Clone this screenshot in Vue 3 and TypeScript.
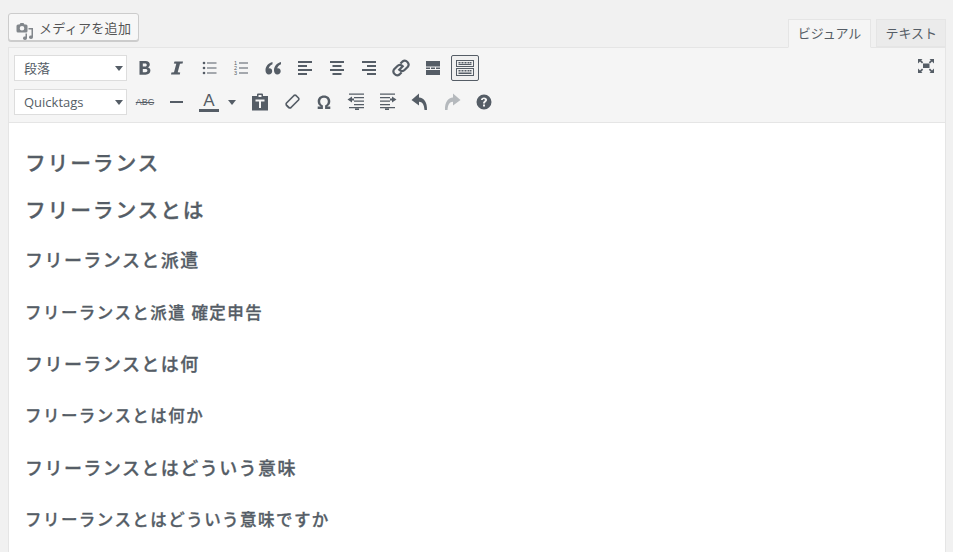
<script setup lang="ts">
interface Line { text: string; size: string; nudge: string }
const lines: Line[] = [
  { text: 'フリーランス', size: 'lg', nudge: 'a' },
  { text: 'フリーランスとは', size: 'lg', nudge: 'b' },
  { text: 'フリーランスと派遣', size: 'md', nudge: 'c' },
  { text: 'フリーランスと派遣 確定申告', size: 'sm', nudge: 'd' },
  { text: 'フリーランスとは何', size: 'md', nudge: 'e' },
  { text: 'フリーランスとは何か', size: 'sm', nudge: 'f' },
  { text: 'フリーランスとはどういう意味', size: 'md', nudge: 'g' },
  { text: 'フリーランスとはどういう意味ですか', size: 'sm', nudge: 'h' },
]
</script>

<template>
  <div class="page">
    <div class="top">
      <button class="media">
        <svg width="18" height="18" viewBox="0 0 18 18">
          <path fill="#82878c" fill-rule="evenodd" d="M2 2.500h1.500L4.500 1h3l1 1.500H10a1.500 1.500 0 0 1 1.500 1.500v5a1.500 1.500 0 0 1-1.500 1.500H2A1.500 1.500 0 0 1 .5 9V4A1.500 1.500 0 0 1 2 2.500zM6 4a2.300 2.300 0 1 0 0 4.600A2.300 2.300 0 0 0 6 4z" />
          <path fill="#82878c" d="M12.500 6H17v9.200a2 1.700 0 1 1-1.500-1.600V7.500h-3zM11 11.500v4.700a2 1.700 0 1 1-1.500-1.600v-3.100z" />
        </svg>
        <span>メディアを追加</span>
      </button>
      <div class="tabs">
        <div class="tab active">ビジュアル</div>
        <div class="tab">テキスト</div>
      </div>
    </div>
    <div class="editor">
      <div class="toolbar">
        <div class="row">
          <div class="select">段落<i></i></div>
          <div class="icons first">
            <svg class="ic" viewBox="0 0 20 20"><path d="M4.500 3h6c2.800 0 4.300 1.300 4.300 3.400 0 1.500-.8 2.500-2.100 2.900 1.700.4 2.700 1.600 2.700 3.300 0 2.500-1.800 4.100-4.800 4.100H4.500zm3.300 2.500v3h2.400c1.100 0 1.600-.6 1.600-1.500s-.6-1.500-1.600-1.500zm0 5.500v3.200h2.600c1.300 0 2-.6 2-1.600s-.7-1.600-2-1.600z" /></svg>
            <svg class="ic" viewBox="0 0 20 20"><path d="M7.500 3.500h8.500l-.4 1.900-2.600.3-2.300 8.600 2.500.3-.4 1.900H4l.4-1.900 2.600-.3 2.300-8.600-2.500-.3z" /></svg>
            <svg class="ic" viewBox="0 0 20 20"><circle cx="5" cy="5" r="1.300" /><circle cx="5" cy="10" r="1.300" /><circle cx="5" cy="15" r="1.300" /><path d="M8 4.500h9.500v1H8zM8 9.500h9.500v1H8zM8 14.500h9.500v1H8z" /></svg>
            <svg class="ic" viewBox="0 0 20 20"><path d="M8 4.500h9v1H8zM8 9.500h9v1H8zM8 14.500h9v1H8z" /><text x="3" y="7" font-size="5.500" font-family="Liberation Sans">1</text><text x="3" y="12" font-size="5.500" font-family="Liberation Sans">2</text><text x="3" y="17" font-size="5.500" font-family="Liberation Sans">3</text></svg>
            <svg class="ic" viewBox="0 0 20 20"><path d="M9.500 4C5.300 5.200 2.500 8.300 2.500 12.300c0 2.500 1.300 4.200 3.300 4.200s3.400-1.400 3.400-3.200c0-1.700-1.100-3-2.700-3-.3 0-.6 0-.9.100.5-1.700 1.900-3.300 3.900-4.200zM18 4c-4.200 1.200-7 4.300-7 8.300 0 2.500 1.300 4.200 3.300 4.200s3.400-1.400 3.400-3.200c0-1.700-1.100-3-2.700-3-.3 0-.6 0-.9.100.5-1.700 1.900-3.300 3.900-4.200z" /></svg>
            <svg class="ic" viewBox="0 0 20 20"><path d="M3 4h14v2H3zM3 8h9v2H3zM3 12h14v2H3zM3 16h9v2H3z" transform="translate(0 -1)" /></svg>
            <svg class="ic" viewBox="0 0 20 20"><path d="M3 4h14v2H3zM5.500 8h9v2h-9zM3 12h14v2H3zM5.500 16h9v2h-9z" transform="translate(0 -1)" /></svg>
            <svg class="ic" viewBox="0 0 20 20"><path d="M3 4h14v2H3zM8 8h9v2H8zM3 12h14v2H3zM8 16h9v2H8z" transform="translate(0 -1)" /></svg>
            <svg class="ic" viewBox="0 0 20 20"><path fill="none" stroke="#555d66" stroke-width="2.200" d="M7.500 12.500l5-5M9.500 5.500l2-2a3.800 3.800 0 0 1 5.300 5.300l-3 3a3.800 3.800 0 0 1-5 .4M10.500 14.500l-2 2a3.800 3.800 0 0 1-5.300-5.300l3-3a3.800 3.800 0 0 1 5-.4" /></svg>
            <svg class="ic" viewBox="0 0 20 20"><path d="M3 3h14v5.500H3zM3 9.500h4v1.500H3zM8 9.500h4v1.500H8zM13 9.500h4v1.500h-4zM3 12h14v5H3z" /></svg>
            <span class="pressed">
              <svg class="ic" viewBox="0 0 20 20"><path fill-rule="evenodd" d="M1 2h18v7H1zm1 1v5h16V3zM1 10h18v8H1zm1 1v6h16v-6z" /><path d="M3.500 4h2v1.500h-2zM6.500 4h2v1.500h-2zM9.500 4h2v1.500h-2zM12.500 4h2v1.500h-2zM15 4h1.500v1.500H15zM3.500 6h13v1h-13zM3.500 12h2v1.500h-2zM6.500 12h2v1.500h-2zM9.500 12h2v1.500h-2zM12.500 12h2v1.500h-2zM15 12h1.500v1.500H15zM3.500 14.500h13v1.500h-13z" /></svg>
            </span>
          </div>
          <svg class="full" viewBox="0 0 18 18"><path d="M6 6.500h6.500v4.500H6zM1 2h4.500L4.200 3.300 6.200 5.300 5 6.500 3 4.500 1 6.500zM17 2v4.500l-2-2-2 2-1.200-1.200 2-2L12.500 2zM1 16v-4.500l2 2 2-2 1.200 1.200-2 2L5.500 16zM17 16h-4.500l1.300-1.300-2-2L13 11.500l2 2 2-2z" /></svg>
        </div>
        <div class="row">
          <div class="select">Quicktags<i></i></div>
          <div class="icons second">
            <span class="abc">ABC</span>
            <svg class="ic" viewBox="0 0 20 20"><path d="M3 9h13v2H3z" /></svg>
            <span class="color">A</span>
            <i class="caret"></i>
            <svg class="ic paste" viewBox="0 0 20 20"><path fill-rule="evenodd" d="M2 4h5V2.500a1 1 0 0 1 1-1h4a1 1 0 0 1 1 1V4h5v14.500H2zM8.500 3v2h3V3zM5.500 7.500v2H9v6.500h2V9.500h3.500v-2z" /></svg>
            <svg class="ic" viewBox="0 0 20 20"><path fill="none" stroke="#555d66" stroke-width="1.700" stroke-linejoin="round" d="M14 3.500l2.500 2.500a1.500 1.500 0 0 1 0 2L9 15.500a1.500 1.500 0 0 1-2 0L4.500 13a1.500 1.500 0 0 1 0-2L12 3.500a1.500 1.500 0 0 1 2 0z" /><path d="M4.500 12.500l3 3-1 1-3-3z" /></svg>
            <svg class="ic" viewBox="0 0 20 20"><path d="M10 3.500c3.800 0 6.300 2.400 6.300 5.800 0 2.500-1.200 4.200-3.100 5.300h3.100V17h-5.200v-3.600c1.700-.7 2.700-2 2.700-3.900 0-2.200-1.300-3.700-3.800-3.700S6.200 7.300 6.200 9.500c0 1.900 1 3.200 2.700 3.900V17H3.700v-2.400h3.100c-1.900-1.100-3.100-2.800-3.100-5.300 0-3.400 2.500-5.800 6.300-5.800z" /></svg>
            <svg class="ic" viewBox="0 0 20 20"><path d="M3 2.500h15v1.300H3zM8 6h10v1.300H8zM8 9.500h10v1.300H8zM8 13h10v1.300H8zM3 16h15v1.300H3z M9 17.500h4V19H9zM1.500 8.500L6 5.500v2h2v2H6v2z" transform="translate(0 -1)" /></svg>
            <svg class="ic" viewBox="0 0 20 20"><path d="M2 2.500h15v1.300H2zM2 6h10v1.300H2zM2 9.500h10v1.300H2zM2 13h10v1.300H2zM2 16h15v1.300H2z M7 17.500h4V19H7zM18.500 8.500L14 5.500v2h-2v2h2v2z" transform="translate(0 -1)" /></svg>
            <svg class="ic" viewBox="0 0 20 20"><path d="M9 1.500L1.500 8 9 13.500v-3.800c3.500.2 5 2.400 5.500 8.300H17c.3-8-3-12-8-12.500z" /></svg>
            <svg class="ic dim" viewBox="0 0 20 20"><path d="M11 1.500L18.500 8 11 13.500v-3.800c-3.500.2-5 2.400-5.500 8.300H3c-.3-8 3-12 8-12.500z" /></svg>
            <svg class="ic" viewBox="0 0 20 20"><path fill-rule="evenodd" d="M10 2.500a7.500 7.500 0 1 1 0 15 7.500 7.500 0 0 1 0-15zM9 12.500v2h2v-2zm1-7c-1.800 0-3 1-3.100 2.600h2c0-.6.400-1 1-1s1 .3 1 .9c0 1-2 1.300-2 3.500H11c0-1.500 2.100-1.800 2.100-3.700C13.100 6.500 11.800 5.500 10 5.500z" /></svg>
          </div>
        </div>
      </div>
      <div class="content">
        <p v-for="l in lines" :key="l.nudge" :class="[l.size, l.nudge]">{{ l.text }}</p>
      </div>
    </div>
  </div>
</template>

<style>
html, body { margin: 0; height: 100%; overflow: hidden; background: #f1f1f1; }
</style>

<style scoped>
.page {
  width: 953px;
  height: 552px;
  overflow: hidden;
  box-sizing: border-box;
  padding: 0 7px 0 8px;
  background: #f1f1f1;
  font-family: "Noto Sans CJK JP", "Open Sans", sans-serif;
  color: #555d66;
}
.top {
  display: flex;
  justify-content: space-between;
  align-items: flex-end;
  height: 47px;
  position: relative;
  z-index: 1;
}
.media {
  align-self: flex-start;
  margin-top: 13px;
  height: 28px;
  width: 131px;
  box-sizing: border-box;
  padding: 0 0 0 7px;
  display: flex;
  align-items: center;
  gap: 5px;
  background: #f7f7f7;
  border: 1px solid #cccccc;
  border-radius: 3px;
  box-shadow: 0 1px 0 #cccccc;
  font: 13px "Noto Sans CJK JP", sans-serif;
  letter-spacing: 0.3px;
  color: #555555;
}
.media svg { margin-top: 8px; flex: none; }
.tabs { display: flex; gap: 5px; margin-bottom: -1px; }
.tab {
  height: 28px;
  line-height: 26px;
  box-sizing: border-box;
  padding: 0 8px;
  font-size: 13px;
  border: 1px solid #e5e5e5;
  background: #ebebeb;
  color: #555d66;
}
.tab.active {
  height: 29px;
  padding: 0 9px;
  background: #f5f5f5;
  border-bottom-color: #f5f5f5;
}
.editor {
  border: 1px solid #e5e5e5;
  border-top: none;
  height: 505px;
  box-sizing: border-box;
}
.toolbar {
  position: relative;
  height: 76px;
  box-sizing: border-box;
  background: #f5f5f5;
  border-top: 1px solid #e5e5e5;
  border-bottom: 1px solid #e5e5e5;
  padding: 7px 5px 0;
  display: flex;
  flex-direction: column;
  gap: 8px;
}
.row { display: flex; align-items: center; height: 26px; }
.select {
  width: 113px;
  height: 26px;
  box-sizing: border-box;
  border: 1px solid #dddddd;
  background: #fff;
  padding-left: 9px;
  font: 13px/24px "Open Sans", "Noto Sans CJK JP", sans-serif;
  position: relative;
  flex: none;
}
.select i, .caret {
  display: block;
  width: 0;
  height: 0;
  border-left: 4px solid transparent;
  border-right: 4px solid transparent;
  border-top: 5px solid #555d66;
}
.select i { position: absolute; right: 3px; top: 10px; }
.icons { display: flex; align-items: center; gap: 12px; margin-left: 8px; }
.ic { width: 20px; height: 20px; fill: #555d66; flex: none; }
.dim { fill: #b5b9bd; }
.paste { margin-left: 2px; }
.pressed {
  width: 28px;
  height: 26px;
  box-sizing: border-box;
  margin-left: -4px;
  border: 1px solid #555d66;
  border-radius: 2px;
  background: #f0f0f0;
  display: flex;
  align-items: center;
  justify-content: center;
}
.full { position: absolute; right: 10px; top: 9px; width: 18px; height: 18px; fill: #555d66; }
.abc {
  width: 20px;
  text-align: center;
  font: 9px "Liberation Sans", sans-serif;
  text-decoration: line-through;
  flex: none;
}
.color {
  width: 20px;
  height: 20px;
  text-align: center;
  border-bottom: 3px solid #555d66;
  box-sizing: border-box;
  font: 17px/17px "Liberation Sans", sans-serif;
  flex: none;
}
.caret { margin-left: -3px; }
.content {
  height: 429px;
  background: #fff;
  padding: 26px 16px 0;
  font-weight: 500;
  -webkit-text-stroke: 0.3px #555d66;
  color: #555d66;
}
p { margin: 0; white-space: nowrap; line-height: 26px; }
.lg { font-size: 20.800px; letter-spacing: 1.800px; }
.md { font-size: 18px; letter-spacing: 1.450px; }
.sm { font-size: 16.500px; letter-spacing: 1.450px; }
.a { margin-bottom: 21px; }
.b { margin-bottom: 24px; }
.c { margin-bottom: 27px; }
.d { margin-bottom: 25px; }
.e { margin-bottom: 26px; }
.f { margin-bottom: 26px; }
.g { margin-bottom: 26px; }
</style>
